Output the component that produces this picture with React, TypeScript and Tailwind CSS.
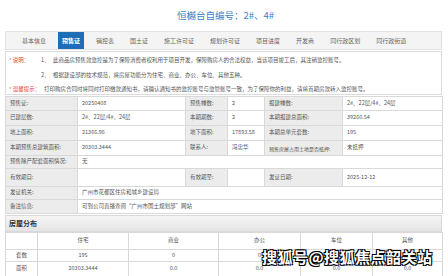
import React from "react";

const tabs = ["基本信息", "预售证", "销控表", "国土证", "施工许可证", "规划许可证", "项目进度", "开发商", "同行政区划", "同行政街道"];

const L = "bg-[#ececec] border border-[#d9d9d9] px-[4px] text-[#555] align-middle whitespace-nowrap overflow-hidden";
const V = "bg-white border border-[#d9d9d9] px-[4px] text-[#555] align-middle whitespace-nowrap overflow-hidden";

export default function App() {
  return (
    <div className="relative w-[448px] h-[276px] overflow-hidden bg-white font-['Noto_Sans_CJK_SC','Noto_Sans',sans-serif] text-[5.5px] leading-none">
      <div className="h-[31px] flex items-center justify-center text-[9.5px] text-[#3f7fc6] pl-[3px]">
        恒樾台自编号：2#、4#
      </div>
      <div className="mx-[5px] w-[437px] h-[19px] bg-[#f4f4f4] border border-[#e2e2e2] flex items-center pl-[12px] gap-[8px]">
        {tabs.map((t, i) => (
          <div
            key={t}
            className={
              i === 1
                ? "h-[17px] px-[4px] flex items-center bg-[#1f6db5] text-white font-bold text-[6px]"
                : "h-[17px] px-[4px] flex items-center text-[#666] text-[6px]"
            }
          >
            {t}
          </div>
        ))}
      </div>
      <div className="mx-[5px] mt-[1px] w-[437px] h-[44px] border border-[#dcdcdc] pt-[6px] flex flex-col gap-[9px] whitespace-nowrap">
        <div className="flex items-center">
          <span className="w-[35px] pl-[3px] text-[#e0403a]">* 说明：</span>
          <span className="w-[12px] text-[#555]">1、</span>
          <span className="text-[#555]">此商品房预售款监控是为了保障消费者权利用于项目开发，保障购房人的合法权益，当该项目竣工后，其注销监控账号。</span>
        </div>
        <div className="flex items-center">
          <span className="w-[35px]"></span>
          <span className="w-[12px] text-[#555]">2、</span>
          <span className="text-[#555]">根据建设部的技术规范，将房屋功能分为住宅、商业、办公、车位、其他五种。</span>
        </div>
        <div className="flex items-center">
          <span className="w-[38px] pl-[3px] text-[#e0403a]">* 温馨提示：</span>
          <span className="text-[#555]">打印购房合同时将同时打印缴款通知书，请确认通知书的监控账号与监管账号一致，为了保障你的利益，请将首期房款转入监控账号。</span>
        </div>
      </div>
      <table className="mx-[5px] mt-[1px] w-[437px] border-collapse table-fixed">
        <colgroup>
          <col className="w-[72px]" />
          <col className="w-[108px]" />
          <col className="w-[42px]" />
          <col className="w-[37px]" />
          <col className="w-[78px]" />
          <col className="w-[100px]" />
        </colgroup>
        <tbody>
          <tr className="h-[14px]">
            <td className={L}>预售证:</td>
            <td className={V}>20250408</td>
            <td className={L}>预售幢数:</td>
            <td className={V}>2</td>
            <td className={L}>报建幢数:</td>
            <td className={V}>2#、22层/4#、24层</td>
          </tr>
          <tr className="h-[15px]">
            <td className={L}>已建层数:</td>
            <td className={V}>2#、22层/4#、24层</td>
            <td className={L}>本期期数:</td>
            <td className={V}>2</td>
            <td className={L}>本期报建总面积:</td>
            <td className={V}>39260.54</td>
          </tr>
          <tr className="h-[15px]">
            <td className={L}>地上面积:</td>
            <td className={V}>21366.96</td>
            <td className={L}>地下面积:</td>
            <td className={V}>17893.58</td>
            <td className={L}>本期总单元套数:</td>
            <td className={V}>195</td>
          </tr>
          <tr className="h-[15px]">
            <td className={L}>本期预售总建筑面积:</td>
            <td className={V}>20303.3444</td>
            <td className={L}>联系人:</td>
            <td className={V}>冯忠华</td>
            <td className={L + " text-[5px] px-[2px]"}>预售房屋占用土地是否抵押:</td>
            <td className={V}>未抵押</td>
          </tr>
          <tr className="h-[13px]">
            <td className={L}>预售除产配套面积情况:</td>
            <td className={V} colSpan={5}>无</td>
          </tr>
          <tr className="h-[18px]">
            <td className={L}>有效期自:</td>
            <td className={V}></td>
            <td className={L}>有效期至:</td>
            <td className={V}></td>
            <td className={L}>发证日期:</td>
            <td className={V}>2025-12-12</td>
          </tr>
          <tr className="h-[13px]">
            <td className={L}>发证机关:</td>
            <td className={V} colSpan={5}>广州市花都区住房和城乡建设局</td>
          </tr>
          <tr className="h-[14px]">
            <td className={L}>备注信息:</td>
            <td className={V} colSpan={5}>可到公司直播查阅“广州市国土规划部”网站</td>
          </tr>
        </tbody>
      </table>
      <div className="mx-[5px] w-[437px] h-[17px] mt-[1px] bg-gradient-to-b from-[#f5f5f5] to-[#e4e4e4] border border-[#d9d9d9] flex items-center pl-[3px] text-[7px] font-bold text-[#333]">
        房屋分布
      </div>
      <table className="mx-[5px] w-[437px] border-collapse table-fixed text-center text-[#555]">
        <colgroup>
          <col className="w-[32px]" />
          <col className="w-[91px]" />
          <col className="w-[90px]" />
          <col className="w-[82px]" />
          <col className="w-[72px]" />
          <col className="w-[70px]" />
        </colgroup>
        <tbody>
          <tr className="h-[17px]">
            <td className="border border-[#d9d9d9]"></td>
            <td className="border border-[#d9d9d9]">住宅</td>
            <td className="border border-[#d9d9d9]">商业</td>
            <td className="border border-[#d9d9d9]">办公</td>
            <td className="border border-[#d9d9d9]">车位</td>
            <td className="border border-[#d9d9d9]">其他</td>
          </tr>
          <tr className="h-[12px]">
            <td className="border border-[#d9d9d9]">套数</td>
            <td className="border border-[#d9d9d9]">195</td>
            <td className="border border-[#d9d9d9]">0</td>
            <td className="border border-[#d9d9d9]">0</td>
            <td className="border border-[#d9d9d9]">0</td>
            <td className="border border-[#d9d9d9]">0</td>
          </tr>
          <tr className="h-[15px]">
            <td className="border border-[#d9d9d9]">面积</td>
            <td className="border border-[#d9d9d9]">20303.3444</td>
            <td className="border border-[#d9d9d9]">0.0</td>
            <td className="border border-[#d9d9d9]">0.0</td>
            <td className="border border-[#d9d9d9]">0.0</td>
            <td className="border border-[#d9d9d9]">0.0</td>
          </tr>
        </tbody>
      </table>
      <div className="absolute left-[262px] top-[249px] text-[15px] leading-none font-bold text-white tracking-[0.5px] [text-shadow:0_0_1px_#000,1px_1px_0_#000,-1px_-1px_0_#000,1px_-1px_0_#000,-1px_1px_0_#000]">
        搜狐号@搜狐焦点韶关站
      </div>
    </div>
  );
}
